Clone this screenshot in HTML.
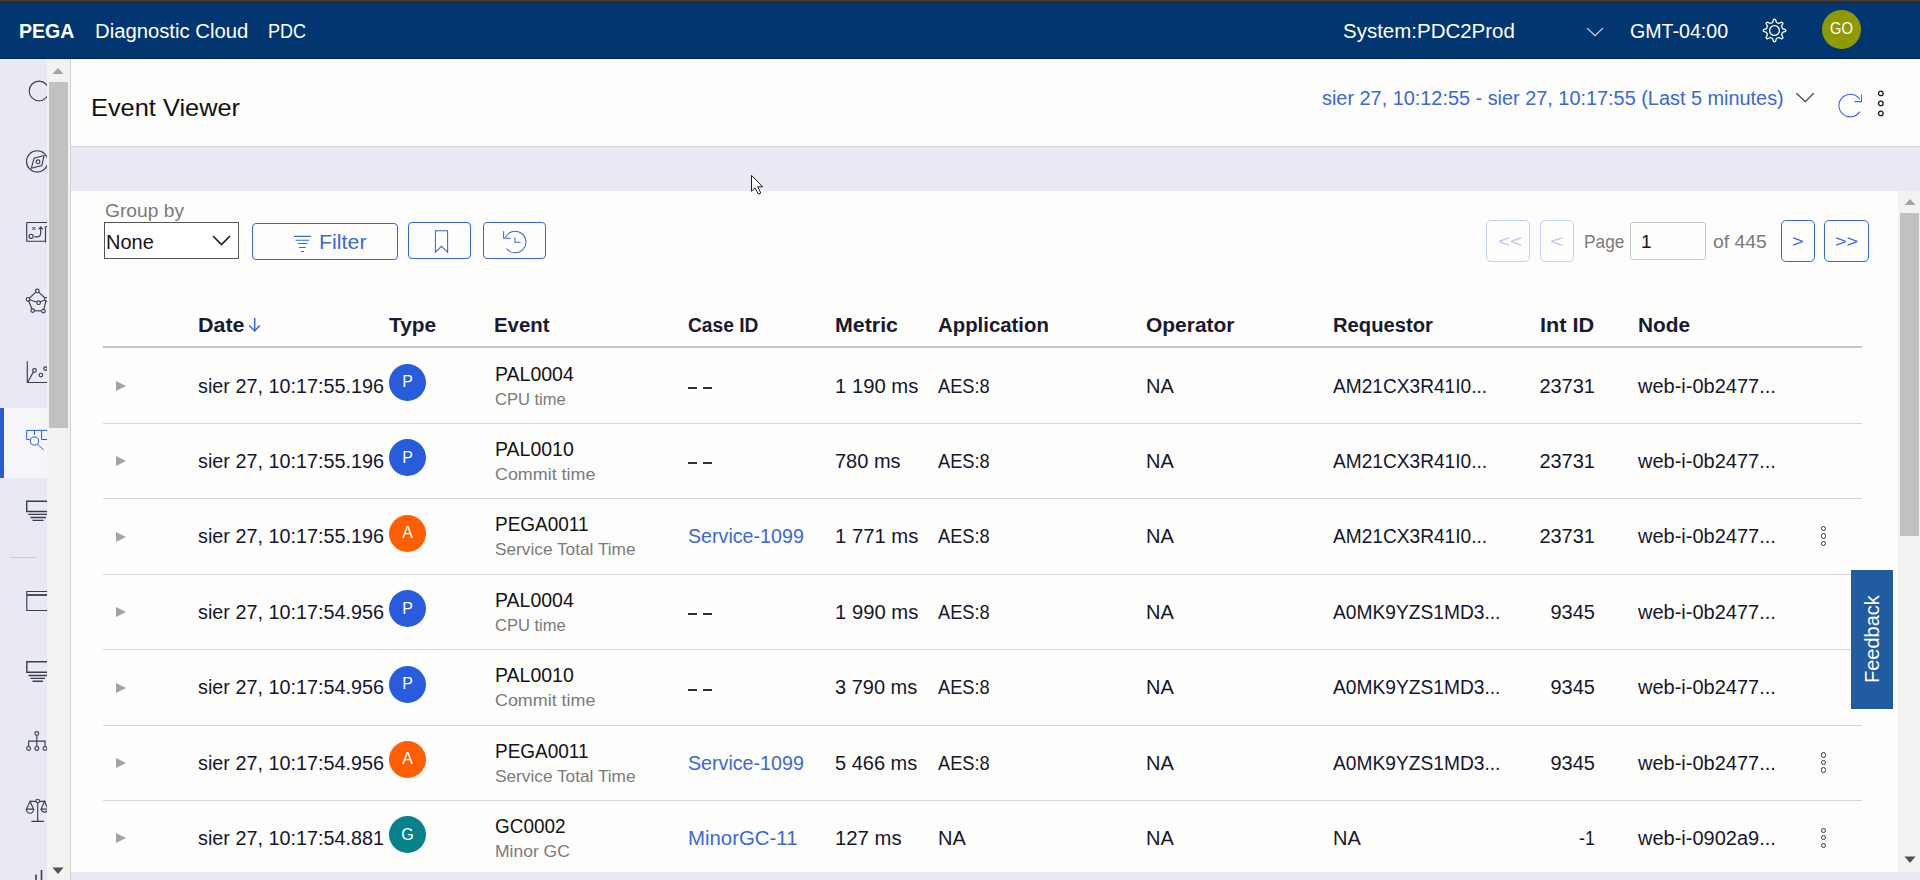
<!DOCTYPE html>
<html><head><meta charset="utf-8">
<style>
*{box-sizing:border-box;margin:0;padding:0}
html,body{width:1920px;height:880px;overflow:hidden;background:#fdfdfc;font-family:"Liberation Sans",sans-serif;color:#1b1b1f;position:relative}
.a{position:absolute}
.tx{position:absolute;white-space:nowrap}
.av{position:absolute;width:37px;height:37px;border-radius:50%}
.tri{position:absolute;width:0;height:0;border-top:5px solid transparent;border-bottom:5px solid transparent;border-left:10px solid #a3a3a3}
.kb{position:absolute;width:6px;height:22px}
.kb i{display:block;width:5.4px;height:5.4px;border:1.1px solid #383838;border-radius:50%;margin-bottom:2.1px}
.dash{position:absolute;width:9px;height:2px;background:#2e2e40}
.rl{position:absolute;left:103px;width:1759px;height:1px;background:#d6d6da}
svg{position:absolute;overflow:visible}
</style></head><body>
<div class="a" style="left:0;top:2px;width:1920px;height:57px;background:#023670"></div>
<div class="a" style="left:0;top:0;width:1920px;height:2px;background:#3a3a3a"></div>
<div class="a" style="left:0;top:2px;width:1920px;height:1px;background:#1f2329"></div>
<div class="a" style="left:0;top:58px;width:1920px;height:1px;background:#01285e"></div>
<!-- chevron header -->
<svg style="left:1586px;top:26px" width="18" height="12"><path d="M1.1 2.1 L9 9.6 L16.9 2.1" fill="none" stroke="#d3d9ec" stroke-width="1.25"/></svg>
<!-- gear -->
<svg style="left:1762px;top:18.4px" width="25" height="25" viewBox="-12.5 -12.5 25 25"><path fill="none" stroke="#fff" stroke-width="1.3" stroke-linejoin="round" d="M-1.98 -7.96 L-0.96 -10.96 Q0.00 -11.60 0.96 -10.96 L1.98 -7.96 A8.2 8.2 0 0 1 4.22 -7.03 L7.07 -8.43 Q8.20 -8.20 8.43 -7.07 L7.03 -4.22 A8.2 8.2 0 0 1 7.96 -1.98 L10.96 -0.96 Q11.60 0.00 10.96 0.96 L7.96 1.98 A8.2 8.2 0 0 1 7.03 4.22 L8.43 7.07 Q8.20 8.20 7.07 8.43 L4.22 7.03 A8.2 8.2 0 0 1 1.98 7.96 L0.96 10.96 Q0.00 11.60 -0.96 10.96 L-1.98 7.96 A8.2 8.2 0 0 1 -4.22 7.03 L-7.07 8.43 Q-8.20 8.20 -8.43 7.07 L-7.03 4.22 A8.2 8.2 0 0 1 -7.96 1.98 L-10.96 0.96 Q-11.60 0.00 -10.96 -0.96 L-7.96 -1.98 A8.2 8.2 0 0 1 -7.03 -4.22 L-8.43 -7.07 Q-8.20 -8.20 -7.07 -8.43 L-4.22 -7.03 A8.2 8.2 0 0 1 -1.98 -7.96 Z"/><circle cx="0" cy="0" r="4.9" fill="none" stroke="#fff" stroke-width="1.3"/></svg>
<div class="a" style="left:1822px;top:10px;width:39px;height:39px;border-radius:50%;background:#8f9a00"></div>

<!-- sidebar -->
<div class="a" style="left:0;top:59px;width:47px;height:821px;background:#e9e9f3;overflow:hidden">
  <div class="a" style="left:0;top:349px;width:47px;height:70px;background:#f6f6fa"></div>
  <div class="a" style="left:0;top:349px;width:4px;height:70px;background:#2a5bd7"></div>
  <div class="a" style="left:10px;top:498px;width:27px;height:1px;background:#c9c9d0"></div>
  <svg style="left:0;top:0" width="47" height="821">
    <g fill="none" stroke="#3a3c4e" stroke-width="1.15">
      <circle cx="39" cy="31.9" r="9.8"/>
      <circle cx="37.2" cy="102.4" r="10.7"/>
      <path d="M44 96.5 L34.1 99.2 L31.4 109.2 L41.8 106.5 Z"/>
      <circle cx="38" cy="102.8" r="1.9"/>
      <path d="M26.7 163.5 H47 M26.7 163.5 V182.2 H45.5 M45.5 167.5 V183.5 M45.5 167.5 H47"/>
      <path d="M32.4 168 l3 3 m0 -3 l-3 3" stroke-width="1"/>
      <circle cx="31.1" cy="177.3" r="2.1"/>
      <path d="M34.5 177.8 H37.5 Q40.7 177.8 40.7 173.5 V168 M38.6 170.3 L40.7 167.8 L42.8 170.3"/>
      <path d="M37.3 231.9 L46.4 240.3 L43.4 252 L32.7 251.6 L28 240.3 Z"/>
      <path d="M28 240.3 L38.6 243.7 L46.4 240.3"/>
      <g fill="#e9e9f3"><circle cx="37.3" cy="231.9" r="1.8"/><circle cx="28" cy="240.3" r="1.8"/><circle cx="46.4" cy="240.3" r="1.8"/><circle cx="32.7" cy="251.6" r="1.8"/><circle cx="43.4" cy="252" r="1.8"/><circle cx="38.6" cy="243.7" r="1.8"/></g>
      <path d="M27.3 302.3 V323.5 H47 M27.8 323 L33.6 312.6"/>
      <circle cx="34.5" cy="311.4" r="1.8"/>
      <circle cx="40.9" cy="316" r="1.8"/>
      <circle cx="45.5" cy="309.6" r="1.8"/>
      <g stroke="#2a5bd7" stroke-width="1.0">
        <path d="M26.7 371.4 V380.5 H29.5 M26.7 371.4 H47 M34.5 371.4 V375.8 M41.6 371.4 V380.5 H47"/>
        <circle cx="34.5" cy="382" r="4.1"/>
        <path d="M37.5 385.2 L43.6 390.8"/>
      </g>
      <g stroke-width="1.4"><path d="M47 442.3 H26.7 V452.5 H47 M28.2 455.4 H47 M30.5 458.5 H45.9 M32.5 461.4 H43.6"/></g>
      <path d="M47 532.5 H26.8 V551.5 H47" />
      <path d="M27 536 H47" stroke-width="1.8"/>
      <g stroke-width="1.4"><path d="M47 602.8 H26.8 V613.3 H47 M28.5 616.5 H47 M30.5 619.4 H45 M32.5 622.2 H43"/></g>
      <circle cx="36.8" cy="674.6" r="1.9"/>
      <path d="M36.8 676.5 V687.5 M28.6 687.5 V682.1 H45 V687.5"/>
      <circle cx="28.6" cy="689.4" r="1.9"/>
      <circle cx="36.8" cy="689.4" r="1.9"/>
      <circle cx="45" cy="689.4" r="1.9"/>
      <circle cx="37.7" cy="742" r="1.8"/>
      <path d="M30 742.4 H35.9 M39.5 742.4 H45.5 M37.7 743.8 V762.4 M31.4 762.4 H44"/>
      <path d="M30 742.4 L26.4 750.1 H33.6 Z M26.4 750.1 A3.6 4.2 0 0 0 33.6 750.1"/>
      <path d="M44.5 742.4 L41.1 750.1 H48 Z M41.1 750.1 A3.6 4.2 0 0 0 48 750.1"/>
      <path d="M36 821 V815.5 M41.5 821 V811" stroke-width="1.6"/>
    </g>
  </svg>
</div>
<!-- left scrollbar -->
<div class="a" style="left:47px;top:59px;width:23px;height:821px;background:#f2f2f1"></div>
<div class="a" style="left:49px;top:82px;width:19px;height:346px;background:#c1c1c1"></div>
<svg style="left:52px;top:67px" width="12" height="8"><path d="M0.5 7 L6 1 L11.5 7 Z" fill="#a3a3a3"/></svg>
<svg style="left:52px;top:867px" width="12" height="8"><path d="M0.5 0.5 L6 7 L11.5 0.5 Z" fill="#505050"/></svg>
<div class="a" style="left:70px;top:59px;width:1px;height:821px;background:#cfcfd2"></div>

<!-- title bar -->
<div class="a" style="left:71px;top:146px;width:1849px;height:1px;background:#d4d4d8"></div>
<div class="a" style="left:71px;top:147px;width:1849px;height:733px;background:#e9e9f3"></div>
<div class="a" style="left:71px;top:191px;width:1827px;height:681px;background:#fdfdfc"></div>
<!-- right scrollbar -->
<div class="a" style="left:1898px;top:191px;width:22px;height:681px;background:#f2f2f1"></div>
<div class="a" style="left:1900px;top:213px;width:19px;height:323px;background:#c1c1c1"></div>
<svg style="left:1904px;top:198px" width="12" height="8"><path d="M0.5 7 L6 1 L11.5 7 Z" fill="#a3a3a3"/></svg>
<svg style="left:1904px;top:856px" width="12" height="8"><path d="M0.5 0.5 L6 7 L11.5 0.5 Z" fill="#505050"/></svg>

<!-- date range chevron, refresh, kebab -->
<svg style="left:1795px;top:92px" width="20" height="12"><path d="M1.3 1.1 L10.3 9.6 L18.8 1.1" fill="none" stroke="#3b3b3b" stroke-width="1.3"/></svg>
<svg style="left:1836px;top:91px" width="28" height="30"><path d="M22.6 8.5 A11.3 11.3 0 1 0 22.6 20.6" fill="none" stroke="#3a68d8" stroke-width="1.05" transform="translate(1.2,0)"/><path d="M25.5 3.5 V10.6 H18.5" fill="none" stroke="#3a68d8" stroke-width="1.05"/></svg>
<svg style="left:1876px;top:88px" width="10" height="30"><g fill="none" stroke="#1f1f1f" stroke-width="1.3"><circle cx="4.8" cy="5.4" r="2.3"/><circle cx="4.8" cy="15.4" r="2.3"/><circle cx="4.8" cy="25.4" r="2.3"/></g></svg>

<!-- toolbar -->
<div class="a" style="left:104px;top:222px;width:135px;height:37px;border:1px solid #555;background:#fff"></div>
<svg style="left:211px;top:234px" width="22" height="14"><path d="M2 2 L10.5 10.5 L19 2" fill="none" stroke="#1b1b2b" stroke-width="1.6"/></svg>
<div class="a" style="left:252px;top:223px;width:146px;height:37px;border:1.5px solid #3465dd;border-radius:4px"></div>
<svg style="left:292px;top:234px" width="22" height="20"><g stroke="#3a68d8" stroke-width="1.1"><path d="M1.8 2.4 H19 M3.6 6.3 H17.2 M5.7 9.5 H15.3 M7 13.5 H13.8 M9 17.5 H12"/></g></svg>
<div class="a" style="left:408px;top:222px;width:63px;height:37px;border:1.5px solid #3465dd;border-radius:4px"></div>
<svg style="left:433px;top:229px" width="18" height="26"><path d="M2.4 1.7 H14.6 V23.2 L8.5 17.3 L2.4 23.2 Z" fill="none" stroke="#3a68d8" stroke-width="1.05"/></svg>
<div class="a" style="left:483px;top:222px;width:63px;height:37px;border:1.5px solid #3465dd;border-radius:4px"></div>
<svg style="left:500px;top:227px" width="30" height="28"><g fill="none" stroke="#3a68d8" stroke-width="1.05"><path d="M5.2 10.8 A10.8 10.8 0 1 1 6.5 21.5"/><path d="M3.6 4.3 V11.3 H10.5"/><path d="M14.9 10.5 V15.2 H20.5"/></g></svg>

<div class="a" style="left:1486px;top:220px;width:44px;height:42px;border:1px solid #c3d0f2;border-radius:5px"></div>
<div class="a" style="left:1540px;top:220px;width:34px;height:42px;border:1px solid #c3d0f2;border-radius:5px"></div>
<div class="a" style="left:1630px;top:222px;width:76px;height:38px;border:1px solid #c9c9cf;border-radius:3px"></div>
<div class="a" style="left:1781px;top:220px;width:34px;height:42px;border:1.5px solid #3465dd;border-radius:5px"></div>
<div class="a" style="left:1824px;top:220px;width:45px;height:42px;border:1.5px solid #3465dd;border-radius:5px"></div>

<!-- table header -->
<svg style="left:247px;top:316px" width="16" height="18"><path d="M7.7 2 V15 M2.2 9.5 L7.7 15 L12.7 9.5" fill="none" stroke="#3a68d8" stroke-width="1.5"/></svg>
<div class="a" style="left:103px;top:346px;width:1759px;height:2px;background:#c6c6c6"></div>
<div class="dash" style="left:688px;top:387px"></div><div class="dash" style="left:703px;top:387px"></div>
<div class="av" style="left:389px;top:364.0px;background:#295cdc"></div>
<div class="tri" style="left:116px;top:381.0px"></div>
<div class="dash" style="left:688px;top:462px"></div><div class="dash" style="left:703px;top:462px"></div>
<div class="av" style="left:389px;top:439.4px;background:#295cdc"></div>
<div class="tri" style="left:116px;top:456.4px"></div>
<div class="av" style="left:389px;top:514.8px;background:#fd5f02"></div>
<div class="tri" style="left:116px;top:531.8px"></div>
<div class="kb" style="left:1820.8px;top:526.0px"><i></i><i></i><i></i></div>
<div class="dash" style="left:688px;top:613px"></div><div class="dash" style="left:703px;top:613px"></div>
<div class="av" style="left:389px;top:590.2px;background:#295cdc"></div>
<div class="tri" style="left:116px;top:607.2px"></div>
<div class="dash" style="left:688px;top:689px"></div><div class="dash" style="left:703px;top:689px"></div>
<div class="av" style="left:389px;top:665.6px;background:#295cdc"></div>
<div class="tri" style="left:116px;top:682.6px"></div>
<div class="av" style="left:389px;top:741.0px;background:#fd5f02"></div>
<div class="tri" style="left:116px;top:758.0px"></div>
<div class="kb" style="left:1820.8px;top:752.2px"><i></i><i></i><i></i></div>
<div class="av" style="left:389px;top:816.4px;background:#07818a"></div>
<div class="tri" style="left:116px;top:833.4px"></div>
<div class="kb" style="left:1820.8px;top:827.6px"><i></i><i></i><i></i></div>
<div class="rl" style="top:423px"></div>
<div class="rl" style="top:498px"></div>
<div class="rl" style="top:574px"></div>
<div class="rl" style="top:649px"></div>
<div class="rl" style="top:725px"></div>
<div class="rl" style="top:800px"></div>

<!-- feedback -->
<div class="a" style="left:1851px;top:570px;width:42px;height:139px;background:#235ba0"></div>
<div class="a" style="left:1879px;top:639.5px;width:0;height:0">
  <div style="position:absolute;left:0;top:0;transform:rotate(-90deg);transform-origin:0 0;">
    <div id="fbtxt" style="position:absolute;left:-43px;top:-19px;white-space:nowrap;font-size:20px;line-height:24px;color:#fff">Feedback</div>
  </div>
</div>
<div class="tx" id="t0" style="top:17.72px;font-size:21px;line-height:26px;color:#ffffff;font-weight:bold;left:19px;transform-origin:0 0;transform:scaleX(0.9310);">PEGA</div>
<div class="tx" id="t1" style="top:18.57px;font-size:20px;line-height:25px;color:#ffffff;font-weight:normal;left:95px;transform-origin:0 0;transform:scaleX(1.0133);">Diagnostic Cloud</div>
<div class="tx" id="t2" style="top:18.57px;font-size:20px;line-height:25px;color:#ffffff;font-weight:normal;left:268px;transform-origin:0 0;transform:scaleX(0.9024);">PDC</div>
<div class="tx" id="t3" style="top:18.57px;font-size:20px;line-height:25px;color:#ffffff;font-weight:normal;left:1343px;transform-origin:0 0;transform:scaleX(1.0241);">System:PDC2Prod</div>
<div class="tx" id="t4" style="top:18.57px;font-size:20px;line-height:25px;color:#ffffff;font-weight:normal;left:1630px;transform-origin:0 0;transform:scaleX(0.9800);">GMT-04:00</div>
<div class="tx" id="t5" style="top:19.46px;font-size:16px;line-height:20px;color:#ffffff;font-weight:normal;left:1830px;transform-origin:0 0;transform:scaleX(0.9200);">GO</div>
<div class="tx" id="t6" style="top:92.68px;font-size:24px;line-height:30px;color:#121212;font-weight:normal;left:91px;transform-origin:0 0;transform:scaleX(1.0571);">Event Viewer</div>
<div class="tx" id="t7" style="top:85.57px;font-size:20px;line-height:25px;color:#3a68d8;font-weight:normal;left:1322px;transform-origin:0 0;transform:scaleX(0.9935);">sier 27, 10:12:55 - sier 27, 10:17:55 (Last 5 minutes)</div>
<div class="tx" id="t8" style="top:199.76px;font-size:18px;line-height:22px;color:#7a7a7a;font-weight:normal;left:105px;transform-origin:0 0;transform:scaleX(1.0677);">Group by</div>
<div class="tx" id="t9" style="top:229.57px;font-size:20px;line-height:25px;color:#141414;font-weight:normal;left:106px;transform-origin:0 0;">None</div>
<div class="tx" id="t10" style="top:229.57px;font-size:20px;line-height:25px;color:#3a68d8;font-weight:normal;left:319px;transform-origin:0 0;transform:scaleX(1.0687);">Filter</div>
<div class="tx" id="t11" style="top:230.42px;font-size:19px;line-height:24px;color:#7a7a7a;font-weight:normal;left:1584px;transform-origin:0 0;transform:scaleX(0.9100);">Page</div>
<div class="tx" id="t12" style="top:230.42px;font-size:19px;line-height:24px;color:#141414;font-weight:normal;left:1641px;transform-origin:0 0;">1</div>
<div class="tx" id="t13" style="top:230.42px;font-size:19px;line-height:24px;color:#7a7a7a;font-weight:normal;left:1713px;transform-origin:0 0;transform:scaleX(1.0192);">of 445</div>
<div class="tx" id="t14" style="top:232.46px;font-size:16px;line-height:20px;color:#b9c6ea;font-weight:normal;left:1498px;transform-origin:0 0;transform:scaleX(1.2941);"><<</div>
<div class="tx" id="t15" style="top:232.46px;font-size:16px;line-height:20px;color:#b9c6ea;font-weight:normal;left:1550px;transform-origin:0 0;transform:scaleX(1.4286);"><</div>
<div class="tx" id="t16" style="top:232.46px;font-size:16px;line-height:20px;color:#3a68d8;font-weight:normal;left:1792px;transform-origin:0 0;transform:scaleX(1.2500);">></div>
<div class="tx" id="t17" style="top:232.46px;font-size:16px;line-height:20px;color:#3a68d8;font-weight:normal;left:1835px;transform-origin:0 0;transform:scaleX(1.2379);">>></div>
<div class="tx" id="t18" style="top:312.57px;font-size:20px;line-height:25px;color:#1a1a2e;font-weight:bold;left:198px;transform-origin:0 0;transform:scaleX(1.0714);">Date</div>
<div class="tx" id="t19" style="top:312.57px;font-size:20px;line-height:25px;color:#1a1a2e;font-weight:bold;left:389px;transform-origin:0 0;transform:scaleX(1.0444);">Type</div>
<div class="tx" id="t20" style="top:312.57px;font-size:20px;line-height:25px;color:#1a1a2e;font-weight:bold;left:494px;transform-origin:0 0;transform:scaleX(1.0185);">Event</div>
<div class="tx" id="t21" style="top:312.57px;font-size:20px;line-height:25px;color:#1a1a2e;font-weight:bold;left:688px;transform-origin:0 0;transform:scaleX(0.9589);">Case ID</div>
<div class="tx" id="t22" style="top:312.57px;font-size:20px;line-height:25px;color:#1a1a2e;font-weight:bold;left:835px;transform-origin:0 0;transform:scaleX(1.0690);">Metric</div>
<div class="tx" id="t23" style="top:312.57px;font-size:20px;line-height:25px;color:#1a1a2e;font-weight:bold;left:938px;transform-origin:0 0;transform:scaleX(1.0185);">Application</div>
<div class="tx" id="t24" style="top:312.57px;font-size:20px;line-height:25px;color:#1a1a2e;font-weight:bold;left:1146px;transform-origin:0 0;transform:scaleX(1.0471);">Operator</div>
<div class="tx" id="t25" style="top:312.57px;font-size:20px;line-height:25px;color:#1a1a2e;font-weight:bold;left:1333px;transform-origin:0 0;transform:scaleX(1.0102);">Requestor</div>
<div class="tx" id="t26" style="top:312.57px;font-size:20px;line-height:25px;color:#1a1a2e;font-weight:bold;left:1540px;transform-origin:0 0;transform:scaleX(1.0816);">Int ID</div>
<div class="tx" id="t27" style="top:312.57px;font-size:20px;line-height:25px;color:#1a1a2e;font-weight:bold;left:1638px;transform-origin:0 0;transform:scaleX(1.0408);">Node</div>
<div class="tx" id="t28" style="top:373.57px;font-size:20px;line-height:25px;color:#17172b;font-weight:normal;left:198px;transform-origin:0 0;transform:scaleX(0.9894);">sier 27, 10:17:55.196</div>
<div class="tx" id="t29" style="top:361.57px;font-size:20px;line-height:25px;color:#141414;font-weight:normal;left:495px;transform-origin:0 0;transform:scaleX(0.9750);">PAL0004</div>
<div class="tx" id="t30" style="top:388.61px;font-size:17px;line-height:21px;color:#7b7b7b;font-weight:normal;left:495px;transform-origin:0 0;transform:scaleX(0.9722);">CPU time</div>
<div class="tx" id="t31" style="top:373.57px;font-size:20px;line-height:25px;color:#17172b;font-weight:normal;left:835px;transform-origin:0 0;transform:scaleX(1.0123);">1 190 ms</div>
<div class="tx" id="t32" style="top:373.57px;font-size:20px;line-height:25px;color:#17172b;font-weight:normal;left:938px;transform-origin:0 0;transform:scaleX(0.9107);">AES:8</div>
<div class="tx" id="t33" style="top:373.57px;font-size:20px;line-height:25px;color:#17172b;font-weight:normal;left:1146px;transform-origin:0 0;">NA</div>
<div class="tx" id="t34" style="top:373.57px;font-size:20px;line-height:25px;color:#17172b;font-weight:normal;left:1333px;transform-origin:0 0;transform:scaleX(0.9563);">AM21CX3R41I0...</div>
<div class="tx" id="t35" style="top:373.57px;font-size:20px;line-height:25px;color:#17172b;font-weight:normal;right:325px;transform-origin:100% 0;">23731</div>
<div class="tx" id="t36" style="top:373.57px;font-size:20px;line-height:25px;color:#17172b;font-weight:normal;left:1638px;transform-origin:0 0;">web-i-0b2477...</div>
<div class="tx" id="t37" style="top:372.46px;font-size:16px;line-height:20px;color:#ffffff;font-weight:normal;left:389px;width:37px;text-align:center;">P</div>
<div class="tx" id="t38" style="top:448.97px;font-size:20px;line-height:25px;color:#17172b;font-weight:normal;left:198px;transform-origin:0 0;transform:scaleX(0.9894);">sier 27, 10:17:55.196</div>
<div class="tx" id="t39" style="top:436.97px;font-size:20px;line-height:25px;color:#141414;font-weight:normal;left:495px;transform-origin:0 0;transform:scaleX(0.9750);">PAL0010</div>
<div class="tx" id="t40" style="top:464.01px;font-size:17px;line-height:21px;color:#7b7b7b;font-weight:normal;left:495px;transform-origin:0 0;transform:scaleX(1.0526);">Commit time</div>
<div class="tx" id="t41" style="top:448.97px;font-size:20px;line-height:25px;color:#17172b;font-weight:normal;left:835px;transform-origin:0 0;">780 ms</div>
<div class="tx" id="t42" style="top:448.97px;font-size:20px;line-height:25px;color:#17172b;font-weight:normal;left:938px;transform-origin:0 0;transform:scaleX(0.9107);">AES:8</div>
<div class="tx" id="t43" style="top:448.97px;font-size:20px;line-height:25px;color:#17172b;font-weight:normal;left:1146px;transform-origin:0 0;">NA</div>
<div class="tx" id="t44" style="top:448.97px;font-size:20px;line-height:25px;color:#17172b;font-weight:normal;left:1333px;transform-origin:0 0;transform:scaleX(0.9563);">AM21CX3R41I0...</div>
<div class="tx" id="t45" style="top:448.97px;font-size:20px;line-height:25px;color:#17172b;font-weight:normal;right:325px;transform-origin:100% 0;">23731</div>
<div class="tx" id="t46" style="top:448.97px;font-size:20px;line-height:25px;color:#17172b;font-weight:normal;left:1638px;transform-origin:0 0;">web-i-0b2477...</div>
<div class="tx" id="t47" style="top:447.86px;font-size:16px;line-height:20px;color:#ffffff;font-weight:normal;left:389px;width:37px;text-align:center;">P</div>
<div class="tx" id="t48" style="top:524.37px;font-size:20px;line-height:25px;color:#17172b;font-weight:normal;left:198px;transform-origin:0 0;transform:scaleX(0.9894);">sier 27, 10:17:55.196</div>
<div class="tx" id="t49" style="top:512.37px;font-size:20px;line-height:25px;color:#141414;font-weight:normal;left:495px;transform-origin:0 0;transform:scaleX(0.9485);">PEGA0011</div>
<div class="tx" id="t50" style="top:539.41px;font-size:17px;line-height:21px;color:#7b7b7b;font-weight:normal;left:495px;transform-origin:0 0;transform:scaleX(1.0145);">Service Total Time</div>
<div class="tx" id="t51" style="top:524.37px;font-size:20px;line-height:25px;color:#3a68d8;font-weight:normal;left:688px;transform-origin:0 0;transform:scaleX(0.9829);">Service-1099</div>
<div class="tx" id="t52" style="top:524.37px;font-size:20px;line-height:25px;color:#17172b;font-weight:normal;left:835px;transform-origin:0 0;transform:scaleX(1.0123);">1 771 ms</div>
<div class="tx" id="t53" style="top:524.37px;font-size:20px;line-height:25px;color:#17172b;font-weight:normal;left:938px;transform-origin:0 0;transform:scaleX(0.9107);">AES:8</div>
<div class="tx" id="t54" style="top:524.37px;font-size:20px;line-height:25px;color:#17172b;font-weight:normal;left:1146px;transform-origin:0 0;">NA</div>
<div class="tx" id="t55" style="top:524.37px;font-size:20px;line-height:25px;color:#17172b;font-weight:normal;left:1333px;transform-origin:0 0;transform:scaleX(0.9563);">AM21CX3R41I0...</div>
<div class="tx" id="t56" style="top:524.37px;font-size:20px;line-height:25px;color:#17172b;font-weight:normal;right:325px;transform-origin:100% 0;">23731</div>
<div class="tx" id="t57" style="top:524.37px;font-size:20px;line-height:25px;color:#17172b;font-weight:normal;left:1638px;transform-origin:0 0;">web-i-0b2477...</div>
<div class="tx" id="t58" style="top:523.26px;font-size:16px;line-height:20px;color:#ffffff;font-weight:normal;left:389px;width:37px;text-align:center;">A</div>
<div class="tx" id="t59" style="top:599.77px;font-size:20px;line-height:25px;color:#17172b;font-weight:normal;left:198px;transform-origin:0 0;transform:scaleX(0.9894);">sier 27, 10:17:54.956</div>
<div class="tx" id="t60" style="top:587.77px;font-size:20px;line-height:25px;color:#141414;font-weight:normal;left:495px;transform-origin:0 0;transform:scaleX(0.9750);">PAL0004</div>
<div class="tx" id="t61" style="top:614.81px;font-size:17px;line-height:21px;color:#7b7b7b;font-weight:normal;left:495px;transform-origin:0 0;transform:scaleX(0.9722);">CPU time</div>
<div class="tx" id="t62" style="top:599.77px;font-size:20px;line-height:25px;color:#17172b;font-weight:normal;left:835px;transform-origin:0 0;transform:scaleX(1.0123);">1 990 ms</div>
<div class="tx" id="t63" style="top:599.77px;font-size:20px;line-height:25px;color:#17172b;font-weight:normal;left:938px;transform-origin:0 0;transform:scaleX(0.9107);">AES:8</div>
<div class="tx" id="t64" style="top:599.77px;font-size:20px;line-height:25px;color:#17172b;font-weight:normal;left:1146px;transform-origin:0 0;">NA</div>
<div class="tx" id="t65" style="top:599.77px;font-size:20px;line-height:25px;color:#17172b;font-weight:normal;left:1333px;transform-origin:0 0;transform:scaleX(0.9595);">A0MK9YZS1MD3...</div>
<div class="tx" id="t66" style="top:599.77px;font-size:20px;line-height:25px;color:#17172b;font-weight:normal;right:325px;transform-origin:100% 0;">9345</div>
<div class="tx" id="t67" style="top:599.77px;font-size:20px;line-height:25px;color:#17172b;font-weight:normal;left:1638px;transform-origin:0 0;">web-i-0b2477...</div>
<div class="tx" id="t68" style="top:598.66px;font-size:16px;line-height:20px;color:#ffffff;font-weight:normal;left:389px;width:37px;text-align:center;">P</div>
<div class="tx" id="t69" style="top:675.17px;font-size:20px;line-height:25px;color:#17172b;font-weight:normal;left:198px;transform-origin:0 0;transform:scaleX(0.9894);">sier 27, 10:17:54.956</div>
<div class="tx" id="t70" style="top:663.17px;font-size:20px;line-height:25px;color:#141414;font-weight:normal;left:495px;transform-origin:0 0;transform:scaleX(0.9750);">PAL0010</div>
<div class="tx" id="t71" style="top:690.21px;font-size:17px;line-height:21px;color:#7b7b7b;font-weight:normal;left:495px;transform-origin:0 0;transform:scaleX(1.0526);">Commit time</div>
<div class="tx" id="t72" style="top:675.17px;font-size:20px;line-height:25px;color:#17172b;font-weight:normal;left:835px;transform-origin:0 0;">3 790 ms</div>
<div class="tx" id="t73" style="top:675.17px;font-size:20px;line-height:25px;color:#17172b;font-weight:normal;left:938px;transform-origin:0 0;transform:scaleX(0.9107);">AES:8</div>
<div class="tx" id="t74" style="top:675.17px;font-size:20px;line-height:25px;color:#17172b;font-weight:normal;left:1146px;transform-origin:0 0;">NA</div>
<div class="tx" id="t75" style="top:675.17px;font-size:20px;line-height:25px;color:#17172b;font-weight:normal;left:1333px;transform-origin:0 0;transform:scaleX(0.9595);">A0MK9YZS1MD3...</div>
<div class="tx" id="t76" style="top:675.17px;font-size:20px;line-height:25px;color:#17172b;font-weight:normal;right:325px;transform-origin:100% 0;">9345</div>
<div class="tx" id="t77" style="top:675.17px;font-size:20px;line-height:25px;color:#17172b;font-weight:normal;left:1638px;transform-origin:0 0;">web-i-0b2477...</div>
<div class="tx" id="t78" style="top:674.06px;font-size:16px;line-height:20px;color:#ffffff;font-weight:normal;left:389px;width:37px;text-align:center;">P</div>
<div class="tx" id="t79" style="top:750.57px;font-size:20px;line-height:25px;color:#17172b;font-weight:normal;left:198px;transform-origin:0 0;transform:scaleX(0.9894);">sier 27, 10:17:54.956</div>
<div class="tx" id="t80" style="top:738.57px;font-size:20px;line-height:25px;color:#141414;font-weight:normal;left:495px;transform-origin:0 0;transform:scaleX(0.9485);">PEGA0011</div>
<div class="tx" id="t81" style="top:765.61px;font-size:17px;line-height:21px;color:#7b7b7b;font-weight:normal;left:495px;transform-origin:0 0;transform:scaleX(1.0145);">Service Total Time</div>
<div class="tx" id="t82" style="top:750.57px;font-size:20px;line-height:25px;color:#3a68d8;font-weight:normal;left:688px;transform-origin:0 0;transform:scaleX(0.9829);">Service-1099</div>
<div class="tx" id="t83" style="top:750.57px;font-size:20px;line-height:25px;color:#17172b;font-weight:normal;left:835px;transform-origin:0 0;">5 466 ms</div>
<div class="tx" id="t84" style="top:750.57px;font-size:20px;line-height:25px;color:#17172b;font-weight:normal;left:938px;transform-origin:0 0;transform:scaleX(0.9107);">AES:8</div>
<div class="tx" id="t85" style="top:750.57px;font-size:20px;line-height:25px;color:#17172b;font-weight:normal;left:1146px;transform-origin:0 0;">NA</div>
<div class="tx" id="t86" style="top:750.57px;font-size:20px;line-height:25px;color:#17172b;font-weight:normal;left:1333px;transform-origin:0 0;transform:scaleX(0.9595);">A0MK9YZS1MD3...</div>
<div class="tx" id="t87" style="top:750.57px;font-size:20px;line-height:25px;color:#17172b;font-weight:normal;right:325px;transform-origin:100% 0;">9345</div>
<div class="tx" id="t88" style="top:750.57px;font-size:20px;line-height:25px;color:#17172b;font-weight:normal;left:1638px;transform-origin:0 0;">web-i-0b2477...</div>
<div class="tx" id="t89" style="top:749.46px;font-size:16px;line-height:20px;color:#ffffff;font-weight:normal;left:389px;width:37px;text-align:center;">A</div>
<div class="tx" id="t90" style="top:825.97px;font-size:20px;line-height:25px;color:#17172b;font-weight:normal;left:198px;transform-origin:0 0;transform:scaleX(0.9894);">sier 27, 10:17:54.881</div>
<div class="tx" id="t91" style="top:813.97px;font-size:20px;line-height:25px;color:#141414;font-weight:normal;left:495px;transform-origin:0 0;transform:scaleX(0.9459);">GC0002</div>
<div class="tx" id="t92" style="top:841.01px;font-size:17px;line-height:21px;color:#7b7b7b;font-weight:normal;left:495px;transform-origin:0 0;transform:scaleX(1.0282);">Minor GC</div>
<div class="tx" id="t93" style="top:825.97px;font-size:20px;line-height:25px;color:#3a68d8;font-weight:normal;left:688px;transform-origin:0 0;transform:scaleX(1.0189);">MinorGC-11</div>
<div class="tx" id="t94" style="top:825.97px;font-size:20px;line-height:25px;color:#17172b;font-weight:normal;left:835px;transform-origin:0 0;transform:scaleX(1.0159);">127 ms</div>
<div class="tx" id="t95" style="top:825.97px;font-size:20px;line-height:25px;color:#17172b;font-weight:normal;left:938px;transform-origin:0 0;">NA</div>
<div class="tx" id="t96" style="top:825.97px;font-size:20px;line-height:25px;color:#17172b;font-weight:normal;left:1146px;transform-origin:0 0;">NA</div>
<div class="tx" id="t97" style="top:825.97px;font-size:20px;line-height:25px;color:#17172b;font-weight:normal;left:1333px;transform-origin:0 0;">NA</div>
<div class="tx" id="t98" style="top:825.97px;font-size:20px;line-height:25px;color:#17172b;font-weight:normal;right:325px;transform-origin:100% 0;transform:scaleX(0.8889);">-1</div>
<div class="tx" id="t99" style="top:825.97px;font-size:20px;line-height:25px;color:#17172b;font-weight:normal;left:1638px;transform-origin:0 0;">web-i-0902a9...</div>
<div class="tx" id="t100" style="top:824.86px;font-size:16px;line-height:20px;color:#ffffff;font-weight:normal;left:389px;width:37px;text-align:center;">G</div>
<!-- cursor -->
<svg style="left:750px;top:174px" width="16" height="22"><path d="M1.5 1.3 V17.2 L5 13.8 L8.4 20.2 L10.8 19 L7.7 12.8 L12.6 12.8 Z" fill="#fff" stroke="#111" stroke-width="0.95" stroke-linejoin="round"/></svg>
</body></html>
